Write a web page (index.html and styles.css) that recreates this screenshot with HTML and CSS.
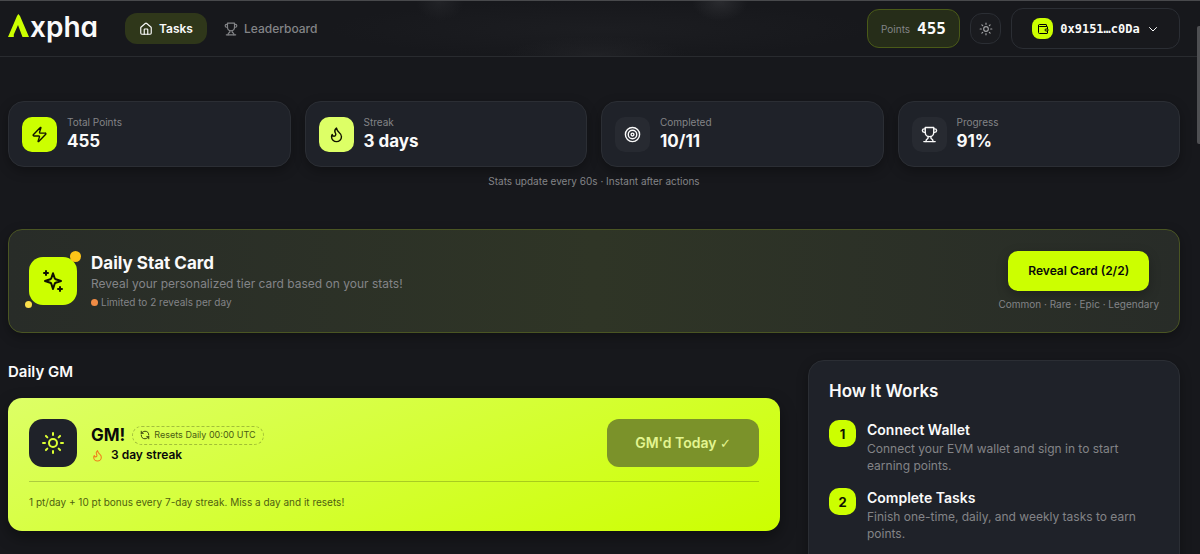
FILE: index.html
```html
<!DOCTYPE html>
<html lang="en">
<head>
<meta charset="utf-8">
<title>Axpha – Tasks</title>
<meta name="viewport" content="width=device-width, initial-scale=1">
<link rel="stylesheet" href="styles.css">
</head>
<body>
<svg class="sprite" aria-hidden="true">
  <symbol id="home" viewBox="0 0 24 24"><path d="M15 21v-8a1 1 0 0 0-1-1h-4a1 1 0 0 0-1 1v8"/><path d="M3 10a2 2 0 0 1 .709-1.528l7-6a2 2 0 0 1 2.582 0l7 6A2 2 0 0 1 21 10v9a2 2 0 0 1-2 2H5a2 2 0 0 1-2-2z"/></symbol>
  <symbol id="trophy" viewBox="0 0 24 24"><path d="M6 9H4.500a2.500 2.500 0 0 1 0-5H6"/><path d="M18 9h1.500a2.500 2.500 0 0 0 0-5H18"/><path d="M4 22h16"/><path d="M10 14.660V17c0 .550-.470.980-.970 1.210C7.850 18.750 7 20.240 7 22"/><path d="M14 14.660V17c0 .550.470.980.970 1.210C16.150 18.750 17 20.240 17 22"/><path d="M18 2H6v7a6 6 0 0 0 12 0V2Z"/></symbol>
  <symbol id="sun" viewBox="0 0 24 24"><circle cx="12" cy="12" r="4"/><path d="M12 2v2M12 20v2M4.930 4.930l1.410 1.410M17.660 17.660l1.410 1.410M2 12h2M20 12h2M6.340 17.660l-1.410 1.410M19.070 4.930l-1.410 1.410"/></symbol>
  <symbol id="wallet" viewBox="0 0 24 24"><path d="M19 7V4a1 1 0 0 0-1-1H5a2 2 0 0 0 0 4h15a1 1 0 0 1 1 1v4h-3a2 2 0 0 0 0 4h3a1 1 0 0 0 1-1v-2a1 1 0 0 0-1-1"/><path d="M3 5v14a2 2 0 0 0 2 2h15a1 1 0 0 0 1-1v-4"/></symbol>
  <symbol id="chevron" viewBox="0 0 24 24"><path d="m5 9 7 7 7-7"/></symbol>
  <symbol id="bolt" viewBox="0 0 24 24"><path d="M4 14a1 1 0 0 1-.780-1.630l9.900-10.200a.5.5 0 0 1 .860.460l-1.920 6.020A1 1 0 0 0 13 10h7a1 1 0 0 1 .780 1.630l-9.900 10.200a.5.5 0 0 1-.860-.460l1.920-6.020A1 1 0 0 0 11 14z"/></symbol>
  <symbol id="flame" viewBox="0 0 24 24"><path d="M8.500 14.500A2.500 2.500 0 0 0 11 12c0-1.380-.5-2-1-3-1.072-2.143-.224-4.054 2-6 .5 2.500 2 4.900 4 6.500 2 1.600 3 3.500 3 5.500a7 7 0 1 1-14 0c0-1.153.433-2.294 1-3a2.500 2.500 0 0 0 2.500 2.500z"/></symbol>
  <symbol id="target" viewBox="0 0 24 24"><circle cx="12" cy="12" r="10"/><circle cx="12" cy="12" r="6"/><circle cx="12" cy="12" r="2"/></symbol>
  <symbol id="sparkles" viewBox="0 0 24 24"><path d="M12 4.200l1.700 5.100a1.600 1.600 0 0 0 1 1L20 12l-5.300 1.700a1.600 1.600 0 0 0-1 1L12 20l-1.700-5.300a1.600 1.600 0 0 0-1-1L4 12l5.300-1.700a1.600 1.600 0 0 0 1-1z"/><path d="M5 2v4M3 4h4M19 18v4M17 20h4"/></symbol>
  <symbol id="refresh" viewBox="0 0 24 24"><path d="M21 12a9 9 0 0 0-9-9 9.750 9.750 0 0 0-6.740 2.740L3 8"/><path d="M3 3v5h5"/><path d="M3 12a9 9 0 0 0 9 9 9.750 9.750 0 0 0 6.740-2.740L21 16"/><path d="M16 16h5v5"/></symbol>
</svg>

<header class="topbar">
  <a class="logo" href="#" aria-label="Axpha">
    <svg class="logo-mark" viewBox="0 0 21 23" aria-hidden="true"><path d="M0 23 9 2 10.300 0 12 2 21 23H14.500L10 11 5.800 20.500V23Z"/></svg>
    <span>xpha</span>
  </a>
  <nav class="nav">
    <a class="nav-link active" href="#"><svg class="icon i14"><use href="#home"/></svg>Tasks</a>
    <a class="nav-link" href="#"><svg class="icon i14"><use href="#trophy"/></svg>Leaderboard</a>
  </nav>
  <div class="actions">
    <div class="points"><span>Points</span><strong>455</strong></div>
    <button class="theme" type="button" aria-label="Toggle theme"><svg class="icon i14"><use href="#sun"/></svg></button>
    <button class="account" type="button"><span class="account-icon"><svg class="icon i12"><use href="#wallet"/></svg></span><span>0x9151…c0Da</span><svg class="icon i12"><use href="#chevron"/></svg></button>
  </div>
</header>

<main class="page">
  <section class="stats" aria-label="Stats">
    <div class="card stat"><span class="tile lime"><svg class="icon i17"><use href="#bolt"/></svg></span><div><p class="label">Total Points</p><p class="value">455</p></div></div>
    <div class="card stat"><span class="tile pale"><svg class="icon i17"><use href="#flame"/></svg></span><div><p class="label">Streak</p><p class="value">3 days</p></div></div>
    <div class="card stat"><span class="tile"><svg class="icon i17"><use href="#target"/></svg></span><div><p class="label">Completed</p><p class="value">10/11</p></div></div>
    <div class="card stat"><span class="tile"><svg class="icon i17"><use href="#trophy"/></svg></span><div><p class="label">Progress</p><p class="value">91%</p></div></div>
  </section>
  <p class="stats-note">Stats update every 60s · Instant after actions</p>

  <section class="reveal">
    <span class="big-tile lime sparkle"><svg class="icon i24"><use href="#sparkles"/></svg></span>
    <div class="reveal-text">
      <h2>Daily Stat Card</h2>
      <p class="sub">Reveal your personalized tier card based on your stats!</p>
      <p class="limit">Limited to 2 reveals per day</p>
    </div>
    <div class="reveal-action">
      <button class="reveal-btn" type="button">Reveal Card (2/2)</button>
      <p>Common · Rare · Epic · Legendary</p>
    </div>
  </section>

  <div class="columns">
    <section>
      <h2 class="section-title">Daily GM</h2>
      <div class="gm">
        <div class="gm-row">
          <span class="big-tile dark"><svg class="icon i24"><use href="#sun"/></svg></span>
          <div class="gm-text">
            <div class="gm-title"><h3>GM!</h3><span class="resets"><svg class="icon i10"><use href="#refresh"/></svg>Resets Daily 00:00 UTC</span></div>
            <p class="streak"><svg class="icon i13"><use href="#flame"/></svg>3 day streak</p>
          </div>
          <button class="gm-btn" type="button" disabled>GM'd Today <span class="check">✓</span></button>
        </div>
        <p class="gm-note">1 pt/day + 10 pt bonus every 7-day streak. Miss a day and it resets!</p>
      </div>
    </section>
    <aside class="card how">
      <h2>How It Works</h2>
      <ol class="steps">
        <li><span class="num">1</span><div><h3>Connect Wallet</h3><p>Connect your EVM wallet and sign in to start earning points.</p></div></li>
        <li><span class="num">2</span><div><h3>Complete Tasks</h3><p>Finish one-time, daily, and weekly tasks to earn points.</p></div></li>
      </ol>
    </aside>
  </div>
</main>
<div class="scroll-thumb" aria-hidden="true"></div>
</body>
</html>
```
FILE: styles.css
```css
:root {
  --bg: #17181c;
  --card: #1f2229;
  --line: #2b2e34;
  --muted: #838487;
  --lime: #ccff00;
  --text: #fafafa;
}
* { box-sizing: border-box; }
html { scrollbar-width: none; background: var(--bg); }
body {
  margin: 0;
  background: var(--bg);
  color: var(--text);
  font-family: Inter, "Liberation Sans", sans-serif;
  font-size: 12px;
  line-height: 16px;
}
h2, h3, p, ol { margin: 0; padding: 0; }
button { font: inherit; color: inherit; border: 0; padding: 0; cursor: pointer; }
a { color: inherit; text-decoration: none; }
.sprite { position: absolute; width: 0; height: 0; }
.icon { fill: none; stroke: currentColor; stroke-width: 2; stroke-linecap: round; stroke-linejoin: round; flex: none; }
.i10 { width: 10px; height: 10px; }
.i12 { width: 12px; height: 12px; }
.i13 { width: 13px; height: 13px; }
.i14 { width: 14px; height: 14px; }
.i17 { width: 17px; height: 17px; }
.i24 { width: 24px; height: 24px; }

.topbar {
  position: sticky;
  top: 0;
  z-index: 2;
  display: flex;
  align-items: center;
  height: 57px;
  padding: 0 20px 0 8px;
  border-top: 1px solid #48494c;
  border-bottom: 1px solid #292b2f;
  background:
    radial-gradient(24px 20px at 440px 0, #222327, transparent),
    radial-gradient(28px 20px at 720px 0, #2a2b2f, transparent),
    radial-gradient(90px 20px at 596px 100%, #202125, transparent),
    radial-gradient(270px 28px at 600px 28px, #1c1d21, transparent),
    var(--bg);
}
.logo { display: flex; align-items: baseline; gap: 1px; width: 117px; padding-bottom: 4px; font-size: 28px; line-height: 36px; font-weight: 600; font-feature-settings: "cv11"; }
.logo-mark { width: 21px; height: 23px; fill: var(--lime); }
.nav { display: flex; gap: 3px; }
.nav-link { display: flex; align-items: center; gap: 6px; height: 31px; padding: 0 14px; border-radius: 12px; color: var(--muted); font-weight: 500; }
.nav-link.active { background: #2f371a; color: var(--text); font-weight: 600; }
.actions { display: flex; align-items: center; gap: 10px; margin-left: auto; }
.points { display: flex; align-items: center; gap: 7px; height: 39px; padding: 0 13px; border: 1px solid #4a5a18; border-radius: 12px; background: #262d19; color: var(--muted); font-size: 10px; }
.points strong { color: var(--text); font: bold 16px/20px "DejaVu Sans Mono", monospace; }
.theme { display: grid; place-items: center; width: 31px; height: 31px; border: 1px solid var(--line); border-radius: 12px; background: #1a1b1f; color: #a0a1a3; }
.account { display: flex; align-items: center; justify-content: center; gap: 7px; width: 169px; height: 41px; border: 1px solid var(--line); border-radius: 12px; background: #18191d; font: bold 12px/16px "DejaVu Sans Mono", monospace; }
.account-icon { display: grid; place-items: center; width: 21px; height: 21px; border-radius: 8px; background: var(--lime); color: #000; }

.page { padding: 44px 20px 24px 8px; }
.card { background: var(--card); border: 1px solid var(--line); border-radius: 16px; box-shadow: 0 4px 12px rgba(0, 0, 0, .3); }
.stats { display: grid; grid-template-columns: repeat(4, 1fr); gap: 14px; }
.stat { display: flex; align-items: center; gap: 10px; padding: 11px 13px; height: 66px; }
.tile { display: grid; place-items: center; width: 35px; height: 35px; border-radius: 10px; background: #272a31; color: var(--text); }
.tile.lime, .big-tile.lime { background: var(--lime); color: #101200; }
.tile.pale { background: #ddff66; color: #101200; }
.label { color: var(--muted); font-size: 10px; line-height: 14px; }
.value { font-size: 17px; line-height: 24px; font-weight: 700; }
.stats-note { margin-top: 6px; text-align: center; color: var(--muted); font-size: 10px; }

.reveal {
  display: flex;
  align-items: center;
  gap: 14px;
  margin-top: 40px;
  padding: 20px;
  min-height: 104px;
  border: 1px solid #4a5523;
  border-radius: 14px;
  background: linear-gradient(90deg, #282c28, #2f3526 50%, #282c28);
  box-shadow: 0 4px 12px rgba(0, 0, 0, .3);
}
.big-tile { position: relative; display: grid; place-items: center; flex: none; width: 48px; height: 48px; border-radius: 14px; }
.sparkle::before, .sparkle::after { content: ""; position: absolute; border-radius: 50%; }
.sparkle::before { top: -6px; right: -4px; width: 11px; height: 11px; background: #fcc418; }
.sparkle::after { bottom: -3px; left: -4px; width: 7px; height: 7px; background: #fbdf4b; }
.reveal h2 { font-size: 17px; line-height: 24px; font-weight: 700; }
.reveal .sub { color: var(--muted); line-height: 18px; }
.limit { display: flex; align-items: center; gap: 3px; color: var(--muted); font-size: 10px; line-height: 19px; }
.limit::before { content: ""; width: 7px; height: 7px; border-radius: 50%; background: #f08c45; }
.reveal-action { margin-left: auto; text-align: center; color: var(--muted); font-size: 10px; }
.reveal-btn { height: 40px; padding: 0 20px; margin-bottom: 5px; border-radius: 10px; background: var(--lime); color: #0a0a0a; font-size: 12px; font-weight: 600; box-shadow: 0 4px 12px rgba(0, 0, 0, .25); }

.columns { display: grid; grid-template-columns: minmax(0, 772fr) minmax(0, 372fr); gap: 28px; margin-top: 27px; }
.section-title { font-size: 15px; line-height: 24px; font-weight: 600; margin-bottom: 14px; }
.gm { padding: 21px; border-radius: 14px; background: linear-gradient(160deg, #ddff66, var(--lime)); color: #0a0a0a; box-shadow: 0 6px 16px rgba(0, 0, 0, .4); }
.gm-row { display: flex; align-items: center; gap: 14px; padding-bottom: 14px; border-bottom: 1px solid rgba(0, 0, 0, .2); }
.big-tile.dark { background: var(--card); color: #ddff33; }
.gm-title { display: flex; align-items: center; gap: 7px; }
.gm-title h3 { font-size: 17px; line-height: 24px; font-weight: 700; }
.resets { display: flex; align-items: center; gap: 4px; height: 19px; padding: 0 7px; border: 1px dashed rgba(0, 0, 0, .25); border-radius: 10px; color: #4b5b12; font-size: 9px; }
.resets .icon { color: #1c2200; }
.streak { display: flex; align-items: center; gap: 7px; font-weight: 600; }
.streak .icon { color: #f07c1c; }
.gm-btn { margin-left: auto; height: 48px; padding: 0 28px; border-radius: 12px; background: #7b922a; color: #e3f591; font-size: 14px; font-weight: 600; }
.check { font-family: "DejaVu Sans", sans-serif; font-size: 13px; }
.gm-note { padding-top: 12px; color: #4f5f10; font-size: 10px; line-height: 16px; }

.how { padding: 18px 20px 80px; align-self: start; }
.how h2 { font-size: 17px; line-height: 24px; font-weight: 600; margin-bottom: 17px; }
.steps { display: grid; gap: 14px; list-style: none; }
.steps li { display: flex; gap: 11px; }
.num { display: grid; place-items: center; flex: none; width: 27px; height: 27px; border-radius: 10px; background: var(--lime); color: #101200; font-size: 13px; font-weight: 700; }
.steps h3 { font-size: 14px; line-height: 20px; font-weight: 600; }
.steps p { color: var(--muted); font-size: 12px; line-height: 17px; }
.scroll-thumb { position: fixed; z-index: 3; right: 0; top: 26px; width: 3px; height: 118px; border-radius: 2px 0 0 2px; background: #4e4f52; }
```
